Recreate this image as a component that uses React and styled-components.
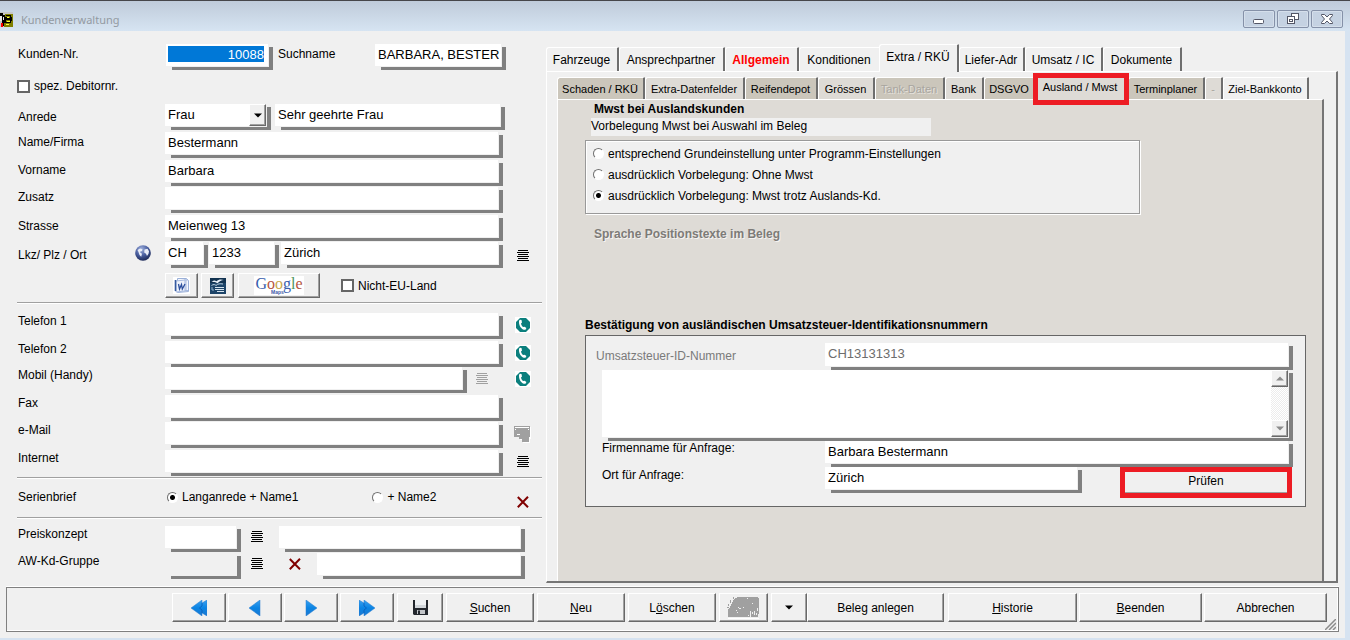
import React from "react";
import styled, { createGlobalStyle, css } from "styled-components";

const GlobalStyle = createGlobalStyle`
  *, *::before, *::after { box-sizing: border-box; }
  body { margin: 0; background: #d6e3f1; }
  body, button, input, select, textarea {
    font-family: "Liberation Sans", Arial, sans-serif;
    font-size: 12px;
    color: #000;
  }
  button { padding: 0; }
`;

/* ---------- window frame ---------- */

const Window = styled.div`
  min-height: 100vh;
  min-width: 1240px;
  display: flex;
  flex-direction: column;
  padding: 0 5px 2px 0;
  border-top: 1px solid #46464a;
  background: #d6e3f1;
`;

const TitleBar = styled.header`
  height: 30px;
  margin-right: -5px;
  padding: 9px 7px 0 0;
  display: flex;
  align-items: flex-start;
  background: linear-gradient(#bfcbda, #d6e4f2);
`;

const Title = styled.h1`
  flex: 1;
  margin: 2px 0 0 8px;
  font: 11px/16px "Noto Sans", "Open Sans", sans-serif;
  color: #939aa2;
`;

const AppIcon = styled.svg`
  width: 13px;
  height: 15px;
  margin-top: 2px;
`;

const CaptionButton = styled.button`
  width: 32px;
  height: 18px;
  margin-left: 2px;
  display: flex;
  align-items: center;
  justify-content: center;
  border: 1px solid #8591a8;
  border-radius: 2px;
  background: #c5d2e2;
  box-shadow: inset 0 0 0 1px #d5dfeb;
`;

const Body = styled.div`
  flex: 1;
  display: flex;
  flex-direction: column;
  background: #f0f0f0;
`;

const Main = styled.main`
  flex: 1;
  display: grid;
  grid-template-columns: 546px 1fr;
  padding: 13px 7px 0 0;
`;

/* ---------- form parts ---------- */

const Customer = styled.form`
  display: flex;
  flex-direction: column;
  padding: 0 4px 0 17px;
`;

const Row = styled.div`
  display: flex;
  align-items: ${(p) => p.$align || "flex-start"};
  padding-right: ${(p) => p.$inset || 0}px;
`;

const Rows = styled.div`
  display: grid;
  grid-template-rows: ${(p) => p.$rows};
`;

const Label = styled.label`
  flex: 0 0 ${(p) => p.$w || 148}px;
  padding-left: 1px;
  line-height: ${(p) => p.$lh || 16}px;
  white-space: nowrap;
`;

const FieldBox = styled.div`
  flex: ${(p) => (p.$w ? `0 0 ${p.$w}px` : "1 1 0")};
  min-width: 0;
  height: ${(p) => p.$h || 26}px;
  display: flex;
  padding: 0 5px 4px 0;
  background: linear-gradient(#808080, #808080) right bottom / calc(100% - 6px) calc(100% - 3px) no-repeat;
`;

const FieldInner = styled.div`
  flex: 1;
  min-width: 0;
  display: flex;
  background: ${(p) => (p.$off ? "#f0f0f0" : "#fff")};
  box-shadow: 1px 1px 0 #f0f0f0;
`;

const Input = styled.input`
  flex: 1;
  min-width: 0;
  width: 100%;
  border: 0;
  outline: 0;
  padding: 0 0 2px 3px;
  background: transparent;
  font-size: 13px;
  ${(p) => p.$muted && css`color: #6d6d6d;`}
  ${(p) =>
    p.$selected &&
    css`
      padding-bottom: 0;
      border: solid #fff;
      border-width: 2px 4px 4px 2px;
      background: #0078d7;
      color: #fff;
      text-align: right;
    `}
`;

const Select = styled.select`
  flex: 1;
  min-width: 0;
  appearance: none;
  border: 0;
  padding: 0 0 2px 3px;
  background: transparent;
  font-size: 13px;
`;

const Bevel = css`
  border: 1px solid;
  border-color: #fff #696969 #696969 #fff;
  box-shadow: inset -1px -1px 0 #a0a0a0;
  background: #f0f0f0;
`;

const DropArrow = styled.span`
  width: 17px;
  display: flex;
  align-items: center;
  justify-content: center;
  pointer-events: none;
  ${Bevel}
`;

const Gap = styled.span`
  flex: 0 0 ${(p) => p.$w}px;
`;

const SideSlot = styled.span`
  flex: 0 0 ${(p) => p.$w || 39}px;
  height: ${(p) => p.$h || 24}px;
  display: flex;
  align-items: center;
  justify-content: center;
`;

const IconButton = styled.button`
  display: flex;
  border: 0;
  background: none;
`;

const Check = styled.label`
  display: flex;
  align-items: center;
  gap: 4px;
  line-height: ${(p) => p.$lh || 16}px;
  white-space: nowrap;
`;

const CheckBox = styled.input.attrs({ type: "checkbox" })`
  appearance: none;
  width: 13px;
  height: 13px;
  margin: 0;
  border: 2px solid #666;
  background: #fff;
`;

const Radio = styled.input.attrs({ type: "radio" })`
  appearance: none;
  width: 11px;
  height: 11px;
  margin: 0;
  border: 1px solid;
  border-color: #707070 #fff #fff #707070;
  border-radius: 50%;
  background: #fff;
  &:checked {
    background: radial-gradient(circle at center, #000 2px, #fff 3px);
  }
`;

const Rule = styled.hr`
  width: 100%;
  margin: ${(p) => p.$m || "0"};
  border: 0;
  border-top: 1px solid #a0a0a0;
  border-bottom: 1px solid #fff;
`;

const ToolButton = styled.button`
  width: ${(p) => p.$w}px;
  height: 25px;
  display: flex;
  align-items: center;
  justify-content: center;
  ${Bevel}
`;

const GoogleMark = styled.span`
  position: relative;
  width: 50px;
  height: 19px;
  background: #fff;
  font: 16px/16px "Liberation Serif", serif;
  text-align: center;
`;

const Letter = styled.span`
  color: ${(p) => p.$c};
`;

const MapsTag = styled.small`
  position: absolute;
  left: 17px;
  bottom: 0;
  font: bold 5px/5px "Liberation Sans", sans-serif;
  color: #3c5aa8;
`;

/* ---------- tabs ---------- */

const TabBar = styled.div`
  display: flex;
  align-items: flex-end;
  height: ${(p) => p.$h}px;
  position: relative;
`;

const Tab = styled.button`
  flex: 0 0 ${(p) => p.$w}px;
  height: ${(p) => p.$h}px;
  border: solid;
  border-width: 1px 2px 0 1px;
  border-color: #fff #6e6e6e #fff #fff;
  border-radius: 3px 1px 0 0;
  background: ${(p) => p.$bg || "#f0f0f0"};
  font-size: ${(p) => p.$size || 12}px;
  white-space: nowrap;
  padding: 0 1px 0 0;
  &:disabled { color: #a8a59f; text-shadow: 1px 1px 0 #e4e1dc; }
  ${(p) => p.$alert && css`color: #f00; font-weight: bold;`}
  ${(p) =>
    p.$active &&
    css`
      position: relative;
      z-index: 1;
      margin-bottom: -1px;
      margin-left: -2px;
      padding-bottom: 3px;
    `}
`;

const Highlight = styled.span`
  position: absolute;
  inset: -3px -3px -5px -2px;
  border: 5px solid #ed1c24;
  pointer-events: none;
`;

const Details = styled.section`
  display: flex;
  flex-direction: column;
`;

const OuterPage = styled.div`
  flex: 1;
  display: flex;
  flex-direction: column;
  padding: 3px 12px 0 10px;
  border: solid;
  border-width: 1px 2px 2px 1px;
  border-color: #fff #757575 #757575 #fff;
`;

const InnerPage = styled.div`
  flex: 1;
  padding: 1px 16px 0 27px;
  border: solid;
  border-width: 1px 2px 0 1px;
  border-color: #fff #757575 #fff #fff;
  background: #dedbd6;
`;

const Heading = styled.h2`
  margin: ${(p) => p.$m || "0"};
  font-size: 12px;
  line-height: 16px;
  ${(p) => p.$muted && css`color: #7d7b78; text-shadow: 1px 1px 0 #f6f4f2;`}
`;

const Strip = styled.p`
  width: 340px;
  margin: 1px 0 4px 6px;
  padding-bottom: 2px;
  line-height: 16px;
  background: #f0f0f0;
`;

const RadioGroup = styled.fieldset`
  max-width: 555px;
  height: 74px;
  margin: 0;
  padding: 2px 7px;
  display: grid;
  grid-template-rows: repeat(3, 21px);
  border: 1px solid #999;
  background: #f0f0f0;
  box-shadow: inset 1px 1px 0 #fff, 1px 1px 0 #fff;
`;

const VatBox = styled.div`
  margin-top: 2px;
  padding: 7px 12px 8px 10px;
  border: 1px solid #666;
  background: #f0f0f0;
`;

const VatRow = styled.div`
  display: flex;
  align-items: flex-start;
  padding-left: ${(p) => p.$indent || 0}px;
`;

const VatLabel = styled(Label)`
  padding-left: 0;
  ${(p) => p.$muted && css`color: #7a7a7a;`}
`;

const TextArea = styled.textarea`
  flex: 1;
  border: 0;
  resize: none;
  outline: 0;
  overflow: hidden;
  background: transparent;
`;

const ScrollBar = styled.div`
  width: 17px;
  display: flex;
  flex-direction: column;
  justify-content: space-between;
  background: repeating-conic-gradient(#fff 0 25%, #ececec 0 50%) 0 0 / 2px 2px;
`;

const ScrollButton = styled.button`
  height: 17px;
  display: flex;
  align-items: center;
  justify-content: center;
  ${Bevel}
`;

const CheckButton = styled.button`
  flex: 0 0 172px;
  height: 31px;
  margin: 0 1px 0 auto;
  padding-bottom: 3px;
  border: 5px solid #ed1c24;
  background: #f0f0f0;
  box-shadow: inset 0 -1px 0 #a0a0a0;
`;

/* ---------- footer ---------- */

const Footer = styled.footer`
  position: relative;
  height: 45px;
  margin: 4px 6px 6px;
  padding: 5px 11px 0 0;
  display: flex;
  justify-content: flex-end;
  gap: 3px;
  border: 1px solid #808080;
  box-shadow: inset -1px -1px 0 #fff, 0 -1px 0 #fff;
`;

const Group = styled.div`
  display: flex;
  gap: ${(p) => p.$gap}px;
  margin-right: ${(p) => p.$mr || 0}px;
`;

const ActionButton = styled.button`
  width: ${(p) => p.$w}px;
  height: 29px;
  display: flex;
  align-items: center;
  justify-content: center;
  white-space: nowrap;
  ${Bevel}
`;

const Grip = styled.svg`
  position: absolute;
  right: 2px;
  bottom: 1px;
  width: 11px;
  height: 11px;
`;

/* ---------- icons ---------- */

const ListIcon = ({ color = "#000" }) => (
  <svg width="12" height="12" viewBox="0 0 12 12" shapeRendering="crispEdges" aria-hidden="true">
    <path d="M1 .5h10M0 2.5h12M1 4.5h10M0 6.5h12M1 8.5h10M0 10.5h12" stroke={color} />
  </svg>
);

const PhoneIcon = () => (
  <svg width="16" height="16" viewBox="0 0 16 16" aria-hidden="true">
    <path d="M0 0h16v16H0z" fill="#fff" />
    <path d="M5 1h6l4 4v6l-4 4H5l-4-4V5z" fill="#0b7f7d" />
    <path d="M5 2.800 6.500 3l.5 2.600-1 .9c.2 1.600 1 2.700 2.300 3.600l1.300-.4 1.800 1.400-.7 1.500c-1.300.6-2.900 0-4.200-1.300C4.800 9.800 3.900 7 4 4.700c0-1 .4-1.600 1-1.900z" fill="#fff" />
  </svg>
);

const CrossIcon = () => (
  <svg width="12" height="12" viewBox="0 0 12 12" aria-hidden="true">
    <path d="M.8 1 11 11.300M11 .8 .8 11.300" stroke="#800000" strokeWidth="2" />
  </svg>
);

const MonitorIcon = () => (
  <svg width="17" height="17" viewBox="0 0 17 17" shapeRendering="crispEdges" aria-hidden="true">
    <path d="M1 1h16v12h-1v4H9v-3H6v-3H1z" fill="#fff" />
    <path d="M0 0h16v11h-1v5H8v-3H5v-2H0z" fill="#a0a0a0" />
    <path d="M1 1.500h14M1 3.500h1M14 3.500h1M3 8.500h3" stroke="#fff" />
  </svg>
);

const GlobeIcon = () => (
  <svg width="16" height="16" viewBox="0 0 16 16" aria-hidden="true">
    <defs>
      <radialGradient id="globe" cx=".4" cy=".25" r=".8">
        <stop offset="0" stopColor="#9fb0dc" />
        <stop offset=".5" stopColor="#4a5fa0" />
        <stop offset="1" stopColor="#16224f" />
      </radialGradient>
    </defs>
    <circle cx="8" cy="8" r="7.800" fill="url(#globe)" />
    <path d="M2.500 5 5 3.500l2.500.8-.5 1.700-2 .7.500 1 1.500 1-.8 3-1.700-1.700L3.500 7z" fill="#e9edf8" />
    <path d="M9.500 4.500l3-.8 1.500 2.500-.5 2.500-1.500 2.300-1-2.200-1.800-1.300z" fill="#e9edf8" />
  </svg>
);

const DownTriangle = ({ color = "#000", up, w = 8 }) => (
  <svg width={w} height="5" viewBox="0 0 8 5" aria-hidden="true">
    <path d={up ? "M0 4.500h8L4 .5z" : "M0 .5h8L4 4.500z"} fill={color} />
  </svg>
);

const WordIcon = () => (
  <svg width="17" height="17" viewBox="0 0 17 17" aria-hidden="true">
    <path d="M0 0h17v17H0z" fill="#fff" />
    <path d="M4.500 1.500h9l2 2v11l-11 1z" fill="#f4f7fd" stroke="#9bb0d8" />
    <path d="M13 2v12M11 3h4M11 13.500h4" stroke="#a9bbdf" />
    <path d="M3 4l9-1v11l-9 1z" fill="#eef2fb" stroke="#a9bbdf" />
    <path d="M2.500 3v11" stroke="#35599f" strokeWidth="1.600" />
    <path d="M5.500 7 6.500 12l2-4.500.8 4.500L12 7" fill="none" stroke="#2c4f9e" strokeWidth="1.300" />
  </svg>
);

const OfficeIcon = () => (
  <svg width="16" height="16" viewBox="0 0 16 16" aria-hidden="true">
    <path d="M0 0h16v16H0z" fill="#1d4468" />
    <path d="M0 0h16v5H0z" fill="#123250" />
    <path d="M1.500 4c2-2 3.500-2 5-.7C8.500 1.200 11 1 14 2c-3 .2-4.500 1.200-6.500 3.200C5.500 3.900 4 3.700 1.500 4z" fill="#e8f0f7" />
    <path d="M1.500 7.500c2-1.500 3.500-1 4.500 0 2-1.800 4-2 7-1.500" fill="none" stroke="#b9cfdf" />
    <path d="M5 9.500h9M5 11.500h9M7 13.500h7" stroke="#d7e4ee" />
    <path d="M2 9v3h2" fill="none" stroke="#8fb0ca" />
  </svg>
);

const ArrowDefs = () => (
  <defs>
    <linearGradient id="blue" x1="0" y1="0" x2="0" y2="1">
      <stop offset="0" stopColor="#3aa0ee" />
      <stop offset=".5" stopColor="#0a84e4" />
      <stop offset="1" stopColor="#1d78d0" />
    </linearGradient>
  </defs>
);

const ARROWS = {
  first: "M0 8 11 0v3l5-3v16l-5-3v3z",
  prev: "M2 8 13 0v16z",
  next: "M3 0l11 8-11 8z",
  last: "M16 8 5 0v3L0 0v16l5-3v3z",
};

const NavArrow = ({ kind }) => (
  <svg width="16" height="16" viewBox="0 0 16 16" aria-hidden="true">
    <ArrowDefs />
    <path d={ARROWS[kind]} fill="url(#blue)" stroke="#2a7fd0" strokeWidth=".5" />
    {kind === "first" && <path d="M11 3v3L8.500 8l2.500 2v3" fill="none" stroke="#0a5cb8" strokeWidth=".8" />}
    {kind === "last" && <path d="M5 3v3L7.500 8 5 10v3" fill="none" stroke="#0a5cb8" strokeWidth=".8" />}
  </svg>
);

const FloppyIcon = () => (
  <svg width="15" height="15" viewBox="0 0 15 15" aria-hidden="true">
    <path d="M0 0h15v15H1l-1-1z" fill="#23272e" />
    <path d="M2 0h11v8H2z" fill="#eef1f4" />
    <path d="M2 5h11v3H2z" fill="#d2d7dc" />
    <path d="M4 10h8v4H4z" fill="#c2c5c9" />
    <path d="M5 10.500h2V14H5z" fill="#23272e" />
  </svg>
);

const StampIcon = () => (
  <svg width="33" height="22" viewBox="0 0 33 22" shapeRendering="crispEdges" aria-hidden="true">
    <path d="M12 0h18l2 2v18H1v-7l2-3 2-4 3-5z" fill="#a0a0a0" />
    <path d="M6 0v2M8 3h2M3 3v3M1 7v2M0 10h2M5 5v2M11 1h1" stroke="#a0a0a0" fill="none" />
    <path d="M12 11h1v1M11 10h1M16 10h1M9 13h1M10 15h1M20 1h1M25 6h1M23 20v-4l1-2M25 17v-2M27 14v4M29 16v2M30 11v3M31 17v4M26 20h3M22 18h-1" stroke="#f0f0f0" fill="none" />
    <path d="M1 21h31" stroke="#fff" />
  </svg>
);

/* ---------- composed controls ---------- */

function Field({ label, w, h, off, ...rest }) {
  return (
    <FieldBox $w={w} $h={h}>
      <FieldInner $off={off}>
        <Input aria-label={label} {...rest} />
      </FieldInner>
    </FieldBox>
  );
}

const ListButton = ({ label, color }) => (
  <IconButton type="button" aria-label={label}>
    <ListIcon color={color} />
  </IconButton>
);

const CallButton = ({ label }) => (
  <IconButton type="button" aria-label={label}>
    <PhoneIcon />
  </IconButton>
);

const CONTACTS = [
  { id: "tel1", text: "Telefon 1", side: <CallButton label="Telefon 1 anrufen" /> },
  { id: "tel2", text: "Telefon 2", side: <CallButton label="Telefon 2 anrufen" /> },
  { id: "mobil", text: "Mobil (Handy)", list: true, side: <CallButton label="Mobil anrufen" /> },
  { id: "fax", text: "Fax", side: null },
  { id: "mail", text: "e-Mail", side: <IconButton type="button" aria-label="e-Mail senden" disabled><MonitorIcon /></IconButton> },
  { id: "web", text: "Internet", side: <ListButton label="Internet-Liste" /> },
];

const OUTER_TABS = [
  { text: "Fahrzeuge", w: 73 },
  { text: "Ansprechpartner", w: 106 },
  { text: "Allgemein", w: 74, alert: true },
  { text: "Konditionen", w: 82 },
  { text: "Extra / RKÜ", w: 80, active: true },
  { text: "Liefer-Adr", w: 66 },
  { text: "Umsatz / IC", w: 78 },
  { text: "Dokumente", w: 79 },
];

const TAN = "#cbc6bb";
const SAND = "#dedbd6";

const INNER_TABS = [
  { text: "Schaden / RKÜ", w: 88, bg: TAN },
  { text: "Extra-Datenfelder", w: 100, bg: SAND },
  { text: "Reifendepot", w: 73, bg: TAN },
  { text: "Grössen", w: 57, bg: SAND },
  { text: "Tank-Daten", w: 70, bg: TAN, disabled: true },
  { text: "Bank", w: 39, bg: SAND },
  { text: "DSGVO", w: 52, bg: TAN },
  { text: "Ausland / Mwst", w: 94, bg: SAND, active: true },
  { text: "Terminplaner", w: 77, bg: TAN },
  { text: "-", w: 18, bg: SAND, disabled: true },
  { text: "Ziel-Bankkonto", w: 86, bg: "#f0f0f0" },
];

const VAT_OPTIONS = [
  "entsprechend Grundeinstellung unter Programm-Einstellungen",
  "ausdrücklich Vorbelegung: Ohne Mwst",
  "ausdrücklich Vorbelegung: Mwst trotz Auslands-Kd.",
];

function CustomerForm() {
  return (
    <Customer onSubmit={(e) => e.preventDefault()}>
      <Row $inset={36}>
        <Label htmlFor="nr" $w={149} $lh={20}>Kunden-Nr.</Label>
        <Field id="nr" w={107} defaultValue="10088" $selected />
        <Gap $w={4} />
        <Label htmlFor="such" $w={98} $lh={20}>Suchname</Label>
        <Field id="such" defaultValue="BARBARA, BESTER" />
      </Row>

      <Row>
        <Check $lh={32}><CheckBox />spez. Debitornr.</Check>
        <SideSlot $w={1} $h={34} />
      </Row>

      <Rows $rows="28px 28px 27px 28px 27px 31px">
        <Row $inset={37}>
          <Label htmlFor="anrede" $lh={26}>Anrede</Label>
          <FieldBox $w={106}>
            <FieldInner>
              <Select id="anrede" defaultValue="Frau">
                <option>Frau</option>
                <option>Herr</option>
                <option>Firma</option>
              </Select>
              <DropArrow><DownTriangle /></DropArrow>
            </FieldInner>
          </FieldBox>
          <Gap $w={4} />
          <Field label="Briefanrede" defaultValue="Sehr geehrte Frau" />
        </Row>
        <Row $inset={39}>
          <Label htmlFor="name" $lh={20}>Name/Firma</Label>
          <Field id="name" defaultValue="Bestermann" />
        </Row>
        <Row $inset={39}>
          <Label htmlFor="vorname" $lh={20}>Vorname</Label>
          <Field id="vorname" defaultValue="Barbara" />
        </Row>
        <Row $inset={39}>
          <Label htmlFor="zusatz" $lh={20}>Zusatz</Label>
          <Field id="zusatz" />
        </Row>
        <Row $inset={39}>
          <Label htmlFor="strasse" $lh={22}>Strasse</Label>
          <Field id="strasse" defaultValue="Meienweg 13" />
        </Row>
        <Row>
          <Label htmlFor="lkz" $w={118} $lh={26}>Lkz/ Plz / Ort</Label>
          <IconButton type="button" aria-label="Länderauswahl"><SideSlot $w={16} $h={22}><GlobeIcon /></SideSlot></IconButton>
          <Gap $w={14} />
          <Field id="lkz" w={43} defaultValue="CH" />
          <Gap $w={1} />
          <Field label="Plz" w={70} defaultValue="1233" />
          <Gap $w={2} />
          <Field label="Ort" defaultValue="Zürich" />
          <SideSlot $h={28}><ListButton label="Ortsliste" /></SideSlot>
        </Row>
      </Rows>

      <Row $align="center">
        <Gap $w={148} />
        <ToolButton type="button" $w={33} aria-label="Word-Brief"><WordIcon /></ToolButton>
        <Gap $w={3} />
        <ToolButton type="button" $w={33} aria-label="OpenOffice-Brief"><OfficeIcon /></ToolButton>
        <Gap $w={4} />
        <ToolButton type="button" $w={82}>
          <GoogleMark>
            <Letter $c="#3a5fae">G</Letter>
            <Letter $c="#b4553f">o</Letter>
            <Letter $c="#c9a94a">o</Letter>
            <Letter $c="#3a5fae">g</Letter>
            <Letter $c="#4f9560">l</Letter>
            <Letter $c="#b4553f">e</Letter>
            <MapsTag>Maps</MapsTag>
          </GoogleMark>
        </ToolButton>
        <Gap $w={21} />
        <Check><CheckBox />Nicht-EU-Land</Check>
      </Row>

      <Rule $m="4px 0 9px" />

      <Rows $rows="28px 26px 28px 27px 28px 27px">
        {CONTACTS.map((c) => (
          <Row key={c.id}>
            <Label htmlFor={c.id}>{c.text}</Label>
            <Field id={c.id} />
            {c.list && (
              <>
                <SideSlot $w={30}><ListButton label="Mobil-Liste" color="#a0a0a0" /></SideSlot>
                <Gap $w={6} />
              </>
            )}
            <SideSlot>{c.side}</SideSlot>
          </Row>
        ))}
      </Rows>

      <Rule $m="0 0 8px" />

      <Row>
        <Label as="span" $w={150} $lh={20}>Serienbrief</Label>
        <Check $lh={20}><Radio name="serie" defaultChecked />Langanrede + Name1</Check>
        <Gap $w={74} />
        <Check $lh={20}><Radio name="serie" />+ Name2</Check>
        <Gap $w={81} />
        <SideSlot $w={12} $h={30}><IconButton type="button" aria-label="Serienbrief löschen"><CrossIcon /></IconButton></SideSlot>
      </Row>

      <Rule $m="0 0 7px" />

      <Rows $rows="27px 26px">
        <Row $inset={17}>
          <Label htmlFor="preis">Preiskonzept</Label>
          <Field id="preis" w={76} />
          <SideSlot $w={32} $h={22}><ListButton label="Preiskonzept-Liste" /></SideSlot>
          <Gap $w={6} />
          <Field label="Preiskonzept-Name" />
        </Row>
        <Row $inset={17}>
          <Label htmlFor="gruppe">AW-Kd-Gruppe</Label>
          <Field id="gruppe" w={76} off />
          <SideSlot $w={32} $h={22}><ListButton label="Gruppen-Liste" /></SideSlot>
          <SideSlot $w={44} $h={22}><IconButton type="button" aria-label="Gruppe löschen"><CrossIcon /></IconButton></SideSlot>
          <Field label="Gruppen-Name" />
        </Row>
      </Rows>
    </Customer>
  );
}

function ForeignVat() {
  return (
    <InnerPage>
      <Heading $m="0 0 0 9px">Mwst bei Auslandskunden</Heading>
      <Strip>Vorbelegung Mwst bei Auswahl im Beleg</Strip>
      <RadioGroup aria-label="Vorbelegung Mwst">
        {VAT_OPTIONS.map((text, i) => (
          <Check key={text}>
            <Radio name="mwst" defaultChecked={i === 2} />
            {text}
          </Check>
        ))}
      </RadioGroup>
      <Heading $m="12px 0 75px 9px" $muted>Sprache Positionstexte im Beleg</Heading>
      <Heading>Bestätigung von ausländischen Umsatzsteuer-Identifikationsnummern</Heading>
      <VatBox>
        <VatRow>
          <VatLabel htmlFor="ust" $w={229} $lh={26} $muted>Umsatzsteuer-ID-Nummer</VatLabel>
          <Field id="ust" h={27} defaultValue="CH13131313" $muted />
        </VatRow>
        <VatRow $indent={6}>
          <FieldBox $h={71}>
            <FieldInner>
              <TextArea aria-label="Ergebnis der Anfrage" />
              <ScrollBar>
                <ScrollButton type="button" aria-label="Nach oben"><DownTriangle up color="#8c8c8c" /></ScrollButton>
                <ScrollButton type="button" aria-label="Nach unten"><DownTriangle color="#8c8c8c" /></ScrollButton>
              </ScrollBar>
            </FieldInner>
          </FieldBox>
        </VatRow>
        <VatRow $indent={6}>
          <VatLabel htmlFor="firma" $w={223} $lh={14}>Firmenname für Anfrage:</VatLabel>
          <Field id="firma" defaultValue="Barbara Bestermann" />
        </VatRow>
        <VatRow $indent={6}>
          <VatLabel htmlFor="ort" $w={223}>Ort für Anfrage:</VatLabel>
          <Field id="ort" w={257} defaultValue="Zürich" />
          <CheckButton type="button">Prüfen</CheckButton>
        </VatRow>
      </VatBox>
    </InnerPage>
  );
}

export default function App() {
  return (
    <>
      <GlobalStyle />
      <Window>
        <TitleBar>
          <AppIcon viewBox="0 0 13 15" shapeRendering="crispEdges" aria-hidden="true">
            <path d="M0 0h13v15H0z" fill="#c6c6c6" />
            <path d="M5 2h8v13H4z" fill="#808000" />
            <path d="M0 1h3v2h2v2h3v3H6v3H4v3H2V9H0z" fill="#000" />
            <path d="M0 4h2v5H0zM3 5h1v3H3z" fill="#e8e8e8" />
            <path d="M1 11h2v4H1z" fill="#f00" />
            <path d="M6 3h5v2h1v4h-1v2H6v-1h4V8H6V6h4V4H6z" fill="#000" />
            <path d="M7 5h2v1H7zM7 9h3v1H7zM6 12h3v1H6z" fill="#ffff40" />
          </AppIcon>
          <Title>Kundenverwaltung</Title>
          <CaptionButton aria-label="Minimieren">
            <svg width="12" height="10" viewBox="0 0 12 10"><rect x=".5" y="5.500" width="10" height="4" rx="1" fill="#fff" stroke="#535666" /></svg>
          </CaptionButton>
          <CaptionButton aria-label="Wiederherstellen">
            <svg width="12" height="12" viewBox="0 0 12 12" fill="#fff" stroke="#535666">
              <rect x="4.500" y=".5" width="7" height="6" />
              <rect x=".5" y="3.500" width="7" height="7" />
              <rect x="2.500" y="6.500" width="3" height="2" />
            </svg>
          </CaptionButton>
          <CaptionButton aria-label="Schliessen">
            <svg width="12" height="10" viewBox="0 0 12 10">
              <path d="M.5.5h3L6 3 8.500.5h3v1L8.500 5l3 3.500v1h-3L6 7 3.500 9.500h-3v-1l3-3.500-3-3.500z" fill="#fff" stroke="#535666" />
            </svg>
          </CaptionButton>
        </TitleBar>

        <Body>
          <Main>
            <CustomerForm />
            <Details>
              <TabBar $h={27} role="tablist">
                {OUTER_TABS.map((t) => (
                  <Tab key={t.text} type="button" role="tab" $w={t.w} $h={t.active ? 28 : 24} $alert={t.alert} $active={t.active}>
                    {t.text}
                  </Tab>
                ))}
              </TabBar>
              <OuterPage>
                <TabBar $h={24} role="tablist">
                  {INNER_TABS.map((t) => (
                    <Tab key={t.text} type="button" role="tab" $w={t.w} $h={t.active ? 25 : 22} $bg={t.bg} $size={11} $active={t.active} disabled={t.disabled}>
                      {t.text}
                      {t.active && <Highlight />}
                    </Tab>
                  ))}
                </TabBar>
                <ForeignVat />
              </OuterPage>
            </Details>
          </Main>

          <Footer>
            <Group $gap={2}>
              {["first", "prev", "next", "last"].map((k) => (
                <ActionButton key={k} type="button" $w={54} aria-label={k}><NavArrow kind={k} /></ActionButton>
              ))}
            </Group>
            <ActionButton type="button" $w={46} aria-label="Speichern"><FloppyIcon /></ActionButton>
            <ActionButton type="button" $w={88}><u>S</u>uchen</ActionButton>
            <ActionButton type="button" $w={88}><u>N</u>eu</ActionButton>
            <ActionButton type="button" $w={88}>L<u>ö</u>schen</ActionButton>
            <ActionButton type="button" $w={49} aria-label="Stempel" disabled><StampIcon /></ActionButton>
            <Group $gap={0} $mr={1}>
              <ActionButton type="button" $w={36} aria-label="Belegart wählen"><DownTriangle /></ActionButton>
              <ActionButton type="button" $w={137}>Beleg anlegen</ActionButton>
            </Group>
            <Group $gap={2}>
              <ActionButton type="button" $w={129}><u>H</u>istorie</ActionButton>
              <ActionButton type="button" $w={123}><u>B</u>eenden</ActionButton>
              <ActionButton type="button" $w={123}>Abbrechen</ActionButton>
            </Group>
            <Grip viewBox="0 0 11 11" aria-hidden="true">
              <path d="M0 11 11 0M4 11l7-7M8 11l3-3" stroke="#8c8c8c" strokeWidth="1.500" />
            </Grip>
          </Footer>
        </Body>
      </Window>
    </>
  );
}
